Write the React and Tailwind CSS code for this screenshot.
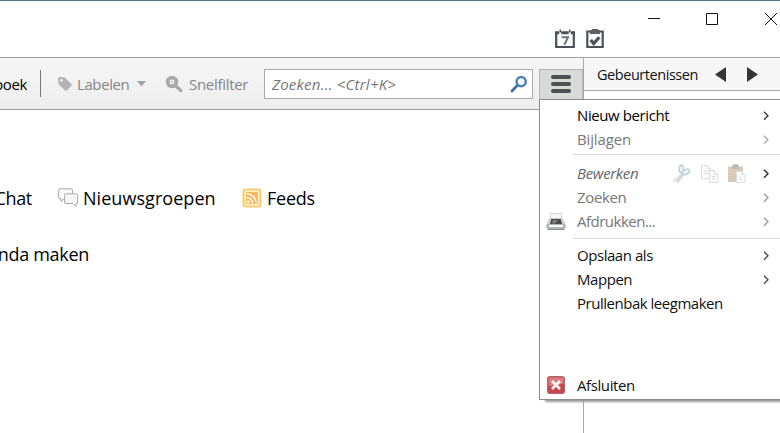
import React from "react";

const menuGroups = [
  {
    spacing: "pt-1 pb-[2px]",
    items: [
      { label: "Nieuw bericht", arrow: "text-[#333]", text: "text-black tracking-[-0.4px]" },
      { label: "Bijlagen", arrow: "text-[#aaa]", text: "text-[#777] tracking-[-0.15px]" },
    ],
  },
  {
    spacing: "pt-[7px] pb-1",
    items: [
      { label: "Bewerken", arrow: "text-[#222]", text: "text-[#666] italic tracking-[-0.35px]", tools: true },
      { label: "Zoeken", arrow: "text-[#999]", text: "text-[#777] tracking-[-0.35px]" },
      { label: "Afdrukken...", arrow: "text-[#999]", text: "text-[#777] tracking-[-0.5px]", icon: "printer" },
    ],
  },
  {
    spacing: "pt-[5px]",
    items: [
      { label: "Opslaan als", arrow: "text-[#444]", text: "text-[#111] tracking-[-0.45px]" },
      { label: "Mappen", arrow: "text-[#444]", text: "text-[#111] tracking-[-0.45px]" },
      { label: "Prullenbak leegmaken", text: "text-[#111] tracking-[-0.48px]" },
    ],
  },
];

const CalendarIcon = () => (
  <svg width="20" height="20" viewBox="0 0 20 20" fill="none">
    <path d="M1.2 3v15h17.6V3" stroke="#4c5157" strokeWidth="2.2" />
    <path d="M0 3.8h4.2M6.3 3.8h7.4M15.8 3.8H20" stroke="#4c5157" strokeWidth="3" />
    <path d="M5.3.5v3M14.7.5v3" stroke="#4c5157" strokeWidth="1.5" />
    <path d="M6.5 8.2H13L9.3 15.8" stroke="#70757a" strokeWidth="2" />
  </svg>
);

const TasksIcon = () => (
  <svg width="18" height="20" viewBox="0 0 18 20" fill="none">
    <path d="M4 2.5H1.3V18h15.4V2.5H14" stroke="#4c5157" strokeWidth="2.2" />
    <path d="M4 1h2V0h6v1h2v4H4z" fill="#5b6066" />
    <path d="M4.7 11l3 3.5 5.6-6.3" stroke="#4c5157" strokeWidth="3.2" />
  </svg>
);

const TagIcon = () => (
  <svg width="16" height="16" viewBox="0 0 16 16">
    <path
      fillRule="evenodd"
      d="M1 2.5Q1 1 2.5 1l5 .3 7 6.8q.8.9 0 1.7l-4.7 4.7q-.9.8-1.7 0L1.4 8zM4.4 3a1.4 1.4 0 1 0 .01 0z"
      fill="#b2b5b7"
    />
  </svg>
);

const QuickFilterIcon = () => (
  <svg width="18" height="18" viewBox="0 0 18 18" fill="none">
    <circle cx="7" cy="7" r="4.3" stroke="#a9a9a9" strokeWidth="3.8" />
    <path d="M11 11l4.7 4.5" stroke="#a9a9a9" strokeWidth="3.3" strokeLinecap="round" />
    <circle cx="7" cy="7" r="1" fill="#bbb" />
  </svg>
);

const SearchIcon = () => (
  <svg width="18" height="18" viewBox="0 0 18 18" fill="none">
    <path d="M2 16l5.5-5.7" stroke="#426ea3" strokeWidth="2.8" strokeLinecap="round" />
    <circle cx="11.2" cy="6.6" r="4.6" fill="#fff" stroke="#4c83b8" strokeWidth="2.5" />
  </svg>
);

const ChatIcon = () => (
  <svg width="21" height="20" viewBox="0 0 21 20" fill="#f8f8f8" stroke="#a8a8a8">
    <path d="M2 .8h11q1.5 0 1.5 1.5v7q0 1.5-1.5 1.5H6L3 13.5v-2.7H2Q.7 10.8.7 9.3v-7Q.7.8 2 .8z" />
    <path d="M8 5.8h10.2q1.5 0 1.5 1.5V14q0 1.5-1.5 1.5H18v3l-3-3H8q-1.4 0-1.4-1.5V7.3Q6.6 5.8 8 5.8z" />
  </svg>
);

const FeedIcon = () => (
  <svg width="20" height="20" viewBox="0 0 20 20" fill="none">
    <rect x="1.5" y="1.5" width="17" height="17" rx="2" fill="#fff0ce" stroke="#f7cc72" strokeWidth="2" />
    <rect x="4" y="4" width="12" height="12" fill="#fbb65c" />
    <circle cx="6.2" cy="13.8" r="1.5" fill="#fffaf0" />
    <path d="M4.7 9.6a5.8 5.8 0 0 1 5.8 5.8M4.7 5.8a9.5 9.5 0 0 1 9.5 9.5" stroke="#fffaf0" strokeWidth="1.6" />
  </svg>
);

const ScissorsIcon = () => (
  <svg width="20" height="20" viewBox="0 0 20 20" fill="none">
    <path d="M10 9.5L.5 16l1.2 2.5L11.5 12z" fill="#dfe3e4" />
    <path d="M9 9.5L4 18l2 1.2L11.5 12z" fill="#d3dadd" />
    <ellipse cx="9.3" cy="5" rx="2" ry="3.8" stroke="#c3d5dc" strokeWidth="2" />
    <ellipse cx="14" cy="8" rx="3.8" ry="2.1" transform="rotate(-25 14 8)" stroke="#c3d5dc" strokeWidth="2" />
  </svg>
);

const CopyIcon = () => (
  <svg width="20" height="20" viewBox="0 0 20 20" fill="#fcfcfc" stroke="#dedede">
    <path d="M1.5 1.5h6l3 3v10h-9z" />
    <path d="M7.5 1.5v3h3M3.5 7h5M3.5 9.5h5" />
    <path d="M9.5 6.5h5l3.5 4v8H9.5z" />
    <path d="M14.5 6.5v4H18M11.5 12.5h4M11.5 15h4" />
  </svg>
);

const PasteIcon = () => (
  <svg width="20" height="20" viewBox="0 0 20 20">
    <path d="M1 2.5h15V18H1z" fill="#d9cbb9" />
    <path d="M5 1h2V0h3v1h2v4H5z" fill="#bcbdb9" />
    <path d="M9.5 7.5h5l3.5 3v8H9.5z" fill="#f9fafa" stroke="#dcdfe0" />
    <path d="M14.5 7.5v3H18M11.5 13h4M11.5 15.5h4" fill="none" stroke="#e4e6e7" />
  </svg>
);

const PrinterIcon = () => (
  <svg width="20" height="18" viewBox="0 0 20 18">
    <path d="M4.5.5h11v7h-11z" fill="#f6f6f6" stroke="#d8d8d8" />
    <path d="M3.5 5L.5 11v3h19v-3l-3-6z" fill="#cdcfd1" />
    <path d="M5.3 6h9.4l1.3 5H4z" fill="#474b4f" />
    <path d="M7 7h5l-3 3.5H6z" fill="#7c8185" />
    <rect x="0.5" y="11" width="19" height="5.5" rx="1.5" fill="#b4b7ba" />
    <path d="M3 12h14v2H3z" fill="#f7f7f7" />
    <path d="M2 16.5h16" stroke="#8a8d90" />
  </svg>
);

const QuitIcon = () => (
  <svg width="18" height="18" viewBox="0 0 18 18">
    <rect x="0.5" y="0.5" width="17" height="17" rx="2" fill="#c4484f" stroke="#ab686c" />
    <path d="M1.5 1.5h15v6q-7 3-15 2z" fill="#d97f83" />
    <path d="M5 5l8 8M13 5l-8 8" stroke="#fff5f1" strokeWidth="2.6" />
  </svg>
);

const MenuItem = ({ item }) => (
  <div className="flex h-6 items-center">
    <div className="flex w-[37px] shrink-0 pl-[6px]">{item.icon && <PrinterIcon />}</div>
    <span className={`whitespace-nowrap pb-px ${item.text}`}>{item.label}</span>
    <div className="ml-auto flex items-center pb-px">
      {item.tools && (
        <div className="mr-[16px] flex gap-[7px]">
          <div className="-ml-px mr-px">
            <ScissorsIcon />
          </div>
          <CopyIcon />
          <PasteIcon />
        </div>
      )}
      {item.arrow && (
        <svg className={`mr-[10px] ${item.arrow}`} width="7" height="10" viewBox="0 0 7 10" fill="none">
          <path d="M1 .8l4 4-4 4" stroke="currentColor" strokeWidth="1.3" />
        </svg>
      )}
    </div>
  </div>
);

const AppMenu = () => (
  <div className="absolute left-[539px] top-[99px] flex h-[301px] w-[242px] flex-col border border-[#8b8b90] bg-white text-[15px] leading-none shadow-[5px_3px_2px_-1px_#999]">
    {menuGroups.map((group, i) => (
      <React.Fragment key={i}>
        {i > 0 && <div className="ml-[33px] h-px shrink-0 bg-[#d3e0ea]" />}
        <div className={group.spacing}>
          {group.items.map((item) => (
            <MenuItem key={item.label} item={item} />
          ))}
        </div>
      </React.Fragment>
    ))}
    <div className="mb-[2px] mt-auto flex h-6 items-center text-[#111]">
      <div className="w-[37px] pl-[7px]">
        <QuitIcon />
      </div>
      <span className="tracking-[-0.4px]">Afsluiten</span>
    </div>
  </div>
);

const TitleBar = () => (
  <header className="flex h-[57px] shrink-0 items-start border-t border-[#4d7891]">
    <div className="ml-[555px] mt-[28px] flex gap-[11px]">
      <CalendarIcon />
      <TasksIcon />
    </div>
    <svg className="ml-[44px] mt-[11px] shrink-0" width="132" height="14" viewBox="0 0 132 14" fill="none" stroke="#111">
      <path d="M0 6.5h12M58.5 1.5h11v11h-11zM117 1l12 12M129 1L117 13" />
    </svg>
  </header>
);

const Toolbar = () => (
  <div className="flex h-[53px] shrink-0 items-center border-y border-[#9c9c9c] bg-gradient-to-b from-[#f6f6f6] to-[#eeeeee] text-[15px] leading-none">
    <div className="flex w-[27px] justify-end overflow-hidden pb-0.5 pt-1 text-black">
      <span className="tracking-[-0.4px]">boek</span>
    </div>
    <div className="ml-[13px] h-[27px] w-px bg-[#777]" />
    <div className="ml-[16px] flex items-center text-[#858585]">
      <TagIcon />
      <span className="ml-1 w-[52px] pt-px tracking-[-0.4px]">Labelen</span>
      <svg className="ml-[8px]" width="9" height="6" viewBox="0 0 9 6">
        <path d="M0 0h9L4.5 5.5z" fill="#a2a2a2" />
      </svg>
    </div>
    <div className="ml-[19px] flex w-[99px] items-center text-[#858585]">
      <QuickFilterIcon />
      <span className="ml-[6px] pt-px tracking-[-0.3px]">Snelfilter</span>
    </div>
    <div className="flex h-[30px] w-[269px] shrink-0 items-center justify-between border border-[#aaa] bg-white pl-[7px] pr-[4px]">
      <span className="pt-px italic tracking-[0.22px] text-[#777]">Zoeken... &lt;Ctrl+K&gt;</span>
      <SearchIcon />
    </div>
    <div className="ml-[6px] mt-[11px] flex h-[31px] w-[44px] shrink-0 flex-col items-center justify-center gap-[3px] self-start border border-b-0 border-[#b4b4b4] bg-[#d9d9d9] pb-[2px]">
      <div className="h-[4px] w-[20px] rounded-sm bg-[#4c5055]" />
      <div className="h-[4px] w-[20px] rounded-sm bg-[#4c5055]" />
      <div className="h-[4px] w-[20px] rounded-sm bg-[#4c5055]" />
    </div>
  </div>
);

const Content = () => (
  <main className="pt-[75px] text-[18px] leading-[26px] text-black">
    <div className="flex items-center">
      <div className="flex w-[32px] justify-end overflow-hidden">
        <span className="tracking-[-0.3px]">Chat</span>
      </div>
      <div className="ml-[26px] flex w-[184px] items-center">
        <ChatIcon />
        <span className="ml-1 tracking-[0.05px]">Nieuwsgroepen</span>
      </div>
      <FeedIcon />
      <span className="ml-[5px] tracking-[-0.25px]">Feeds</span>
    </div>
    <div className="mt-[30px] flex w-[89px] justify-end overflow-hidden">
      <span className="whitespace-nowrap tracking-[-0.3px]">nda maken</span>
    </div>
  </main>
);

const EventsPane = () => (
  <aside className="min-w-0 flex-1 border-l border-[#aaa]">
    <div className="flex h-[34px] items-center border-y border-[#a5a5a5] bg-[#f7f7f7] pl-[13px] text-[14.5px] leading-none text-[#111]">
      <span className="w-[102px] whitespace-nowrap pt-0.5 tracking-[-0.45px]">Gebeurtenissen</span>
      <svg className="ml-[16px]" width="43" height="15" viewBox="0 0 43 15" fill="#333638">
        <path d="M11 0v15L0 7.5zM32 0v15l11-7.5z" />
      </svg>
    </div>
  </aside>
);

const App = () => {
  return (
    <div className="relative flex h-[433px] w-[780px] flex-col overflow-hidden bg-white font-['Open_Sans','Noto_Sans',sans-serif]">
      <TitleBar />
      <div className="flex min-h-0 flex-1">
        <div className="w-[583px] shrink-0">
          <Toolbar />
          <Content />
        </div>
        <EventsPane />
      </div>
      <AppMenu />
    </div>
  );
};

export default App;
